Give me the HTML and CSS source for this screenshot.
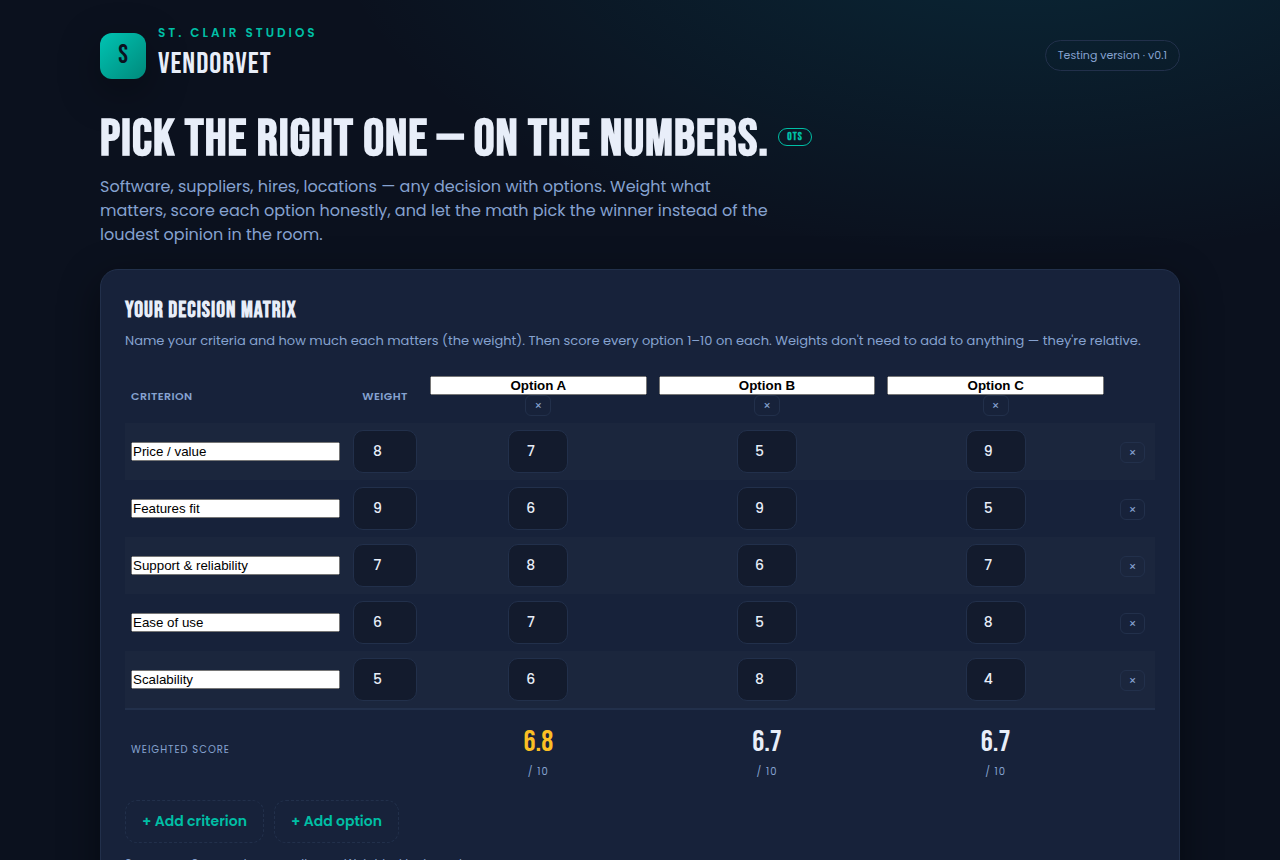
FILE: index.html
```html
<!DOCTYPE html>
<html lang="en">
<head>
<meta charset="UTF-8">
<meta name="viewport" content="width=device-width, initial-scale=1.0">
<title>VendorVet</title>
<link rel="stylesheet" href="styles.css">
</head>
<body>
<div class="wrap">
  <header class="topbar">
    <div class="brand">
      <div class="logo">S</div>
      <div>
        <div class="studio">St. Clair Studios</div>
        <div class="product">VendorVet</div>
      </div>
    </div>
    <span class="pill">Testing version · v0.1</span>
  </header>

  <main>
    <section class="hero">
      <h1>Pick the right one — on the numbers. <span class="badge">OTS</span></h1>
      <p>Software, suppliers, hires, locations — any decision with options. Weight what matters, score each option honestly, and let the math pick the winner instead of the loudest opinion in the room.</p>
    </section>

    <section class="card">
      <h2>Your decision matrix</h2>
      <p class="hint">Name your criteria and how much each matters (the weight). Then score every option 1–10 on each. Weights don't need to add to anything — they're relative.</p>

      <table class="matrix">
        <colgroup>
          <col class="col-crit">
          <col class="col-weight">
          <col>
          <col>
          <col>
          <col class="col-del">
        </colgroup>
        <thead>
          <tr>
            <th class="left">Criterion</th>
            <th>Weight</th>
            <th><input class="opt-name" type="text" value="Option A" aria-label="Option 1 name"><button class="del" type="button" aria-label="Remove Option A">×</button></th>
            <th><input class="opt-name" type="text" value="Option B" aria-label="Option 2 name"><button class="del" type="button" aria-label="Remove Option B">×</button></th>
            <th><input class="opt-name" type="text" value="Option C" aria-label="Option 3 name"><button class="del" type="button" aria-label="Remove Option C">×</button></th>
            <th></th>
          </tr>
        </thead>
        <tbody>
          <tr>
            <td><input class="crit-name" type="text" value="Price / value" aria-label="Criterion 1"></td>
            <td><input class="num weight" type="number" min="1" max="10" value="8" aria-label="Price / value weight"></td>
            <td><input class="num" type="number" min="1" max="10" value="7" aria-label="Price / value, Option A"></td>
            <td><input class="num" type="number" min="1" max="10" value="5" aria-label="Price / value, Option B"></td>
            <td><input class="num" type="number" min="1" max="10" value="9" aria-label="Price / value, Option C"></td>
            <td><button class="del" type="button" aria-label="Remove Price / value">×</button></td>
          </tr>
          <tr>
            <td><input class="crit-name" type="text" value="Features fit" aria-label="Criterion 2"></td>
            <td><input class="num weight" type="number" min="1" max="10" value="9" aria-label="Features fit weight"></td>
            <td><input class="num" type="number" min="1" max="10" value="6" aria-label="Features fit, Option A"></td>
            <td><input class="num" type="number" min="1" max="10" value="9" aria-label="Features fit, Option B"></td>
            <td><input class="num" type="number" min="1" max="10" value="5" aria-label="Features fit, Option C"></td>
            <td><button class="del" type="button" aria-label="Remove Features fit">×</button></td>
          </tr>
          <tr>
            <td><input class="crit-name" type="text" value="Support &amp; reliability" aria-label="Criterion 3"></td>
            <td><input class="num weight" type="number" min="1" max="10" value="7" aria-label="Support weight"></td>
            <td><input class="num" type="number" min="1" max="10" value="8" aria-label="Support, Option A"></td>
            <td><input class="num" type="number" min="1" max="10" value="6" aria-label="Support, Option B"></td>
            <td><input class="num" type="number" min="1" max="10" value="7" aria-label="Support, Option C"></td>
            <td><button class="del" type="button" aria-label="Remove Support &amp; reliability">×</button></td>
          </tr>
          <tr>
            <td><input class="crit-name" type="text" value="Ease of use" aria-label="Criterion 4"></td>
            <td><input class="num weight" type="number" min="1" max="10" value="6" aria-label="Ease of use weight"></td>
            <td><input class="num" type="number" min="1" max="10" value="7" aria-label="Ease of use, Option A"></td>
            <td><input class="num" type="number" min="1" max="10" value="5" aria-label="Ease of use, Option B"></td>
            <td><input class="num" type="number" min="1" max="10" value="8" aria-label="Ease of use, Option C"></td>
            <td><button class="del" type="button" aria-label="Remove Ease of use">×</button></td>
          </tr>
          <tr>
            <td><input class="crit-name" type="text" value="Scalability" aria-label="Criterion 5"></td>
            <td><input class="num weight" type="number" min="1" max="10" value="5" aria-label="Scalability weight"></td>
            <td><input class="num" type="number" min="1" max="10" value="6" aria-label="Scalability, Option A"></td>
            <td><input class="num" type="number" min="1" max="10" value="8" aria-label="Scalability, Option B"></td>
            <td><input class="num" type="number" min="1" max="10" value="4" aria-label="Scalability, Option C"></td>
            <td><button class="del" type="button" aria-label="Remove Scalability">×</button></td>
          </tr>
        </tbody>
        <tfoot>
          <tr>
            <td class="left label">Weighted score</td>
            <td></td>
            <td><div class="score best">6.8</div><div class="label">/ 10</div></td>
            <td><div class="score">6.7</div><div class="label">/ 10</div></td>
            <td><div class="score">6.7</div><div class="label">/ 10</div></td>
            <td></td>
          </tr>
        </tfoot>
      </table>

      <div class="actions">
        <button class="add" type="button">+ Add criterion</button>
        <button class="add" type="button">+ Add option</button>
      </div>
      <p class="note">Scores are Summed across all rows, Weighted by importance.</p>
    </section>
  </main>
</div>
</body>
</html>
```
FILE: styles.css
```css
:root {
  --bg: #0b111e;
  --card: #17223a;
  --field: #131b2d;
  --line: #22304b;
  --text: #e8eef9;
  --muted: #86a2d0;
  --teal: #00bfa5;
  --gold: #fbbf24;
}
* {
  margin: 0;
  padding: 0;
  box-sizing: border-box;
}
body {
  min-height: 100vh;
  font-family: 'Poppins', 'Open Sans', sans-serif;
  font-size: 16px;
  line-height: 24px;
  color: var(--text);
  background: radial-gradient(1000px 500px at 80% -10%, rgba(0, 170, 200, 0.15), transparent 70%) no-repeat var(--bg);
}
.wrap {
  max-width: 1120px;
  margin: 0 auto;
  padding: 24px 20px;
}

/* header */
.topbar {
  display: flex;
  align-items: center;
  justify-content: space-between;
  margin-bottom: 26px;
}
.brand {
  display: flex;
  align-items: center;
  gap: 12px;
}
.logo {
  width: 46px;
  height: 46px;
  display: grid;
  place-items: center;
  border-radius: 12px;
  background: linear-gradient(135deg, #00c4b3, #00897b);
  box-shadow: 0 12px 40px rgba(0, 0, 0, 0.35);
  color: #0b111e;
  font-family: 'Bebas Neue', 'Roboto Condensed', sans-serif;
  font-size: 26px;
}
.studio {
  font-size: 12px;
  line-height: 18px;
  font-weight: 600;
  letter-spacing: 3px;
  text-transform: uppercase;
  color: var(--teal);
}
.product {
  font-family: 'Bebas Neue', 'Roboto Condensed', sans-serif;
  font-size: 30px;
  line-height: 45px;
  letter-spacing: 1px;
}
.pill {
  padding: 6px 12px;
  border: 1px solid var(--line);
  border-radius: 999px;
  font-size: 11px;
  line-height: 17px;
  color: var(--muted);
}

/* intro */
.hero {
  margin-bottom: 22px;
}
.hero h1 {
  font-family: 'Bebas Neue', 'Roboto Condensed', sans-serif;
  font-size: 52px;
  line-height: 54px;
  letter-spacing: 1px;
  margin-bottom: 8px;
}
.hero p {
  max-width: 680px;
  color: var(--muted);
}
.badge {
  display: inline-block;
  padding: 0 8px;
  border: 1px solid var(--teal);
  border-radius: 999px;
  font-size: 11px;
  line-height: 16px;
  letter-spacing: 1px;
  vertical-align: middle;
  color: var(--teal);
}

/* matrix */
.card {
  padding: 24px;
  border: 1px solid var(--line);
  border-radius: 18px;
  background: var(--card);
  box-shadow: 0 12px 40px rgba(0, 0, 0, 0.45);
}
.card h2 {
  font-family: 'Bebas Neue', 'Roboto Condensed', sans-serif;
  font-size: 22px;
  line-height: 34px;
  letter-spacing: 1px;
  margin-bottom: 3px;
}
.hint {
  font-size: 13px;
  line-height: 20px;
  margin-bottom: 18px;
  color: var(--muted);
}
.matrix {
  width: 100%;
  table-layout: fixed;
  border-collapse: collapse;
}
.col-crit { width: 221px; }
.col-weight { width: 78px; }
.col-del { width: 45px; }
.matrix th,
.matrix td {
  padding: 7px 6px;
  text-align: center;
  vertical-align: middle;
}
.matrix th {
  font-size: 11px;
  line-height: 16px;
  font-weight: 600;
  letter-spacing: 0.04em;
  text-transform: uppercase;
  color: var(--muted);
}
.matrix .left {
  text-align: left;
}
.matrix tbody tr:nth-child(odd) {
  background: rgba(255, 255, 255, 0.02);
}
.matrix tfoot tr {
  border-top: 2px solid var(--line);
}
.matrix tfoot td {
  padding-top: 10px;
}
.opt-name,
.crit-name {
  display: block;
  width: 100%;
}
.opt-name {
  text-align: center;
  font-weight: 700;
}
.num {
  display: block;
  width: 60px;
  margin: 0 auto;
  padding: 10px;
  border: 1px solid var(--line);
  border-radius: 10px;
  background: var(--field);
  color: var(--text);
  font-family: inherit;
  font-size: 14px;
  line-height: 21px;
  font-weight: 500;
  text-align: center;
}
.weight {
  width: 64px;
}
.del {
  padding: 2px 8px;
  border: 1px solid var(--line);
  border-radius: 6px;
  background: transparent;
  color: var(--muted);
  font-family: inherit;
  font-size: 12px;
  line-height: 15px;
  vertical-align: middle;
  cursor: pointer;
}
.matrix th .del {
  vertical-align: top;
}
.score {
  font-family: 'Bebas Neue', 'Roboto Condensed', sans-serif;
  font-size: 30px;
  line-height: 44px;
}
.best {
  color: var(--gold);
}
.label {
  font-size: 10px;
  line-height: 15px;
  letter-spacing: 1px;
  text-transform: uppercase;
  color: var(--muted);
}
.actions {
  display: flex;
  flex-wrap: wrap;
  gap: 10px;
  margin: 14px 0 12px;
}
.add {
  padding: 10px 16px;
  border: 1px dashed var(--line);
  border-radius: 12px;
  background: transparent;
  color: var(--teal);
  font-family: inherit;
  font-size: 14px;
  line-height: 21px;
  font-weight: 600;
  cursor: pointer;
}
.note {
  font-size: 12px;
  line-height: 18px;
  color: var(--muted);
}
```
